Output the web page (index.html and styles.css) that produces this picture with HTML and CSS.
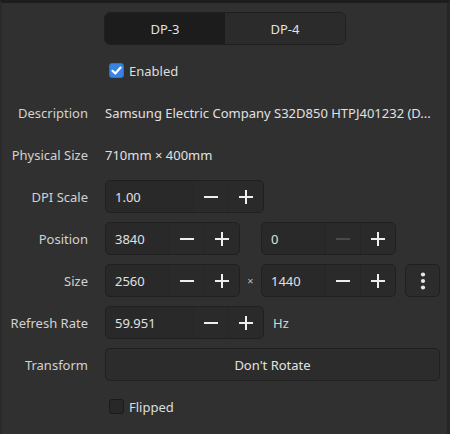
FILE: index.html
```html
<!DOCTYPE html>
<html>
<head>
<meta charset="utf-8">
<link rel="stylesheet" href="styles.css">
</head>
<body>
<div class="panel">
  <div class="grid">
    <div></div>
    <div class="toggle">
      <div class="seg seg-active">DP-3</div>
      <div class="seg">DP-4</div>
    </div>

    <div></div>
    <label class="check"><span class="box box-on"><svg width="11" height="11" viewBox="0 0 11 11"><path d="M1.5 5.8 L4.3 8.5 L9.6 2.6" fill="none" stroke="#fff" stroke-width="2.2" stroke-linecap="round" stroke-linejoin="round"/></svg></span>Enabled</label>

    <div class="label">Description</div>
    <div class="value">Samsung Electric Company S32D850 HTPJ401232 (D...</div>

    <div class="label">Physical Size</div>
    <div class="value">710mm × 400mm</div>

    <div class="label">DPI Scale</div>
    <div class="line">
      <div class="spin spin-wide">
        <div class="entry">1.00</div>
        <div class="btn"><svg width="14" height="14" viewBox="0 0 14 14"><path d="M0 7 H14" stroke="currentColor" stroke-width="2"/></svg></div>
        <div class="btn"><svg width="14" height="14" viewBox="0 0 14 14"><path d="M0 7 H14 M7 0 V14" stroke="currentColor" stroke-width="2"/></svg></div>
      </div>
    </div>

    <div class="label">Position</div>
    <div class="line">
      <div class="spin">
        <div class="entry">3840</div>
        <div class="btn"><svg width="14" height="14" viewBox="0 0 14 14"><path d="M0 7 H14" stroke="currentColor" stroke-width="2"/></svg></div>
        <div class="btn"><svg width="14" height="14" viewBox="0 0 14 14"><path d="M0 7 H14 M7 0 V14" stroke="currentColor" stroke-width="2"/></svg></div>
      </div>
      <div class="sep"></div>
      <div class="spin">
        <div class="entry">0</div>
        <div class="btn btn-off"><svg width="14" height="14" viewBox="0 0 14 14"><path d="M0 7 H14" stroke="currentColor" stroke-width="2"/></svg></div>
        <div class="btn"><svg width="14" height="14" viewBox="0 0 14 14"><path d="M0 7 H14 M7 0 V14" stroke="currentColor" stroke-width="2"/></svg></div>
      </div>
    </div>

    <div class="label">Size</div>
    <div class="line">
      <div class="spin">
        <div class="entry">2560</div>
        <div class="btn"><svg width="14" height="14" viewBox="0 0 14 14"><path d="M0 7 H14" stroke="currentColor" stroke-width="2"/></svg></div>
        <div class="btn"><svg width="14" height="14" viewBox="0 0 14 14"><path d="M0 7 H14 M7 0 V14" stroke="currentColor" stroke-width="2"/></svg></div>
      </div>
      <div class="sep">×</div>
      <div class="spin">
        <div class="entry">1440</div>
        <div class="btn"><svg width="14" height="14" viewBox="0 0 14 14"><path d="M0 7 H14" stroke="currentColor" stroke-width="2"/></svg></div>
        <div class="btn"><svg width="14" height="14" viewBox="0 0 14 14"><path d="M0 7 H14 M7 0 V14" stroke="currentColor" stroke-width="2"/></svg></div>
      </div>
      <div class="menu"><svg width="6" height="18" viewBox="0 0 6 18"><circle cx="3" cy="2.5" r="2.1" fill="currentColor"/><circle cx="3" cy="9" r="2.1" fill="currentColor"/><circle cx="3" cy="15.5" r="2.1" fill="currentColor"/></svg></div>
    </div>

    <div class="label">Refresh Rate</div>
    <div class="line">
      <div class="spin spin-wide">
        <div class="entry">59.951</div>
        <div class="btn"><svg width="14" height="14" viewBox="0 0 14 14"><path d="M0 7 H14" stroke="currentColor" stroke-width="2"/></svg></div>
        <div class="btn"><svg width="14" height="14" viewBox="0 0 14 14"><path d="M0 7 H14 M7 0 V14" stroke="currentColor" stroke-width="2"/></svg></div>
      </div>
      <div class="unit">Hz</div>
    </div>

    <div class="label">Transform</div>
    <div class="button">Don't Rotate</div>

    <div></div>
    <label class="check"><span class="box"></span>Flipped</label>
  </div>
</div>
</body>
</html>
```
FILE: styles.css
```css
html, body {
  margin: 0;
  padding: 0;
  background: #303030;
}
body {
  font-family: "Noto Sans", "Open Sans", sans-serif;
  font-size: 13px;
  color: #dedede;
}
.panel {
  width: 450px;
  height: 434px;
  box-sizing: border-box;
  border-top: 3px solid #1d1d1d;
  border-left: 2px solid #2a2a2a;
  border-right: 3px solid #262626;
  padding-top: 9px;
  background: #303030;
}
.grid {
  display: grid;
  grid-template-columns: 86px 335px;
  grid-auto-rows: 33px;
  column-gap: 17px;
  row-gap: 9px;
}
.label {
  display: flex;
  align-items: center;
  justify-content: flex-end;
  color: #d2d2d2;
  white-space: nowrap;
}
.value {
  display: flex;
  align-items: center;
  white-space: nowrap;
  color: #e0e0e0;
}
.toggle {
  display: flex;
  width: 242px;
  margin-left: -1px;
  border: 1px solid #1f1f1f;
  border-radius: 6px;
  overflow: hidden;
  box-sizing: border-box;
}
.seg {
  flex: 1;
  display: flex;
  align-items: center;
  justify-content: center;
  background: #2b2b2b;
  color: #e2e2e2;
}
.seg-active {
  background: #1c1c1c;
}
.check {
  display: flex;
  align-items: center;
  gap: 5px;
  padding-left: 4px;
  color: #dedede;
}
.box {
  width: 15px;
  height: 15px;
  box-sizing: border-box;
  border-radius: 3px;
  background: #282828;
  border: 1px solid #1a1a1a;
  display: flex;
  align-items: center;
  justify-content: center;
}
.box-on {
  background: #3584e4;
  border-color: #2f73c7;
}
.line {
  display: flex;
  align-items: stretch;
}
.spin {
  display: flex;
  width: 135px;
  box-sizing: border-box;
  border: 1px solid #202020;
  border-radius: 5px;
  background: #292929;
  overflow: hidden;
}
.spin-wide {
  width: 159px;
}
.entry {
  flex: 1;
  display: flex;
  align-items: center;
  padding-left: 9px;
  color: #e0e0e0;
}
.btn {
  width: 34px;
  display: flex;
  align-items: center;
  justify-content: center;
  border-left: 1px solid #262626;
  color: #eeeeee;
  background: #2a2a2a;
}
.btn-off {
  color: #4a4a4a;
}
.sep {
  width: 21px;
  display: flex;
  align-items: center;
  justify-content: center;
  color: #bdbdbd;
  font-size: 11px;
}
.menu {
  margin-left: 9px;
  width: 35px;
  box-sizing: border-box;
  border: 1px solid #202020;
  border-radius: 5px;
  background: #2c2c2c;
  display: flex;
  align-items: center;
  justify-content: center;
  color: #e6e6e6;
}
.unit {
  display: flex;
  align-items: center;
  padding-left: 9px;
  color: #d6d6d6;
}
.button {
  display: flex;
  align-items: center;
  justify-content: center;
  border: 1px solid #202020;
  border-radius: 5px;
  background: #2c2c2c;
  color: #e2e2e2;
}
```
